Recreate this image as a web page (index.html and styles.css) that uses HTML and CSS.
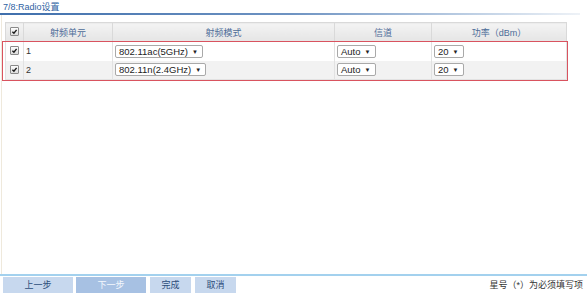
FILE: index.html
```html
<!DOCTYPE html>
<html>
<head>
<meta charset="utf-8">
<link rel="stylesheet" href="styles.css">
</head>
<body>
<div class="page">
  <div class="title">7/8:Radio设置</div>
  <div class="rule"></div>
  <div class="content">
    <table class="grid">
      <colgroup>
        <col class="c0"><col class="c1"><col class="c2"><col class="c3"><col class="c4">
      </colgroup>
      <thead>
        <tr>
          <th><span class="cb"><svg viewBox="0 0 10 10"><path d="M2 5.2 L4.2 7.4 L8 2.6" /></svg></span></th>
          <th>射频单元</th>
          <th>射频模式</th>
          <th>信道</th>
          <th>功率（dBm）</th>
        </tr>
      </thead>
      <tbody>
        <tr>
          <td class="ck"><span class="cb"><svg viewBox="0 0 10 10"><path d="M2 5.2 L4.2 7.4 L8 2.6" /></svg></span></td>
          <td>1</td>
          <td><span class="sel">802.11ac(5GHz)<i>▼</i></span></td>
          <td><span class="sel">Auto<i>▼</i></span></td>
          <td><span class="sel">20<i>▼</i></span></td>
        </tr>
        <tr class="alt">
          <td class="ck"><span class="cb"><svg viewBox="0 0 10 10"><path d="M2 5.2 L4.2 7.4 L8 2.6" /></svg></span></td>
          <td>2</td>
          <td><span class="sel">802.11n(2.4GHz)<i>▼</i></span></td>
          <td><span class="sel">Auto<i>▼</i></span></td>
          <td><span class="sel">20<i>▼</i></span></td>
        </tr>
      </tbody>
    </table>
    <div class="mark"></div>
  </div>
  <div class="footer">
    <div class="btns">
      <span class="btn w70">上一步</span>
      <span class="btn w70 dis">下一步</span>
      <span class="btn w41">完成</span>
      <span class="btn w41">取消</span>
    </div>
    <div class="note">星号（*）为必须填写项</div>
  </div>
</div>
</body>
</html>
```

FILE: styles.css
```css
* { box-sizing: border-box; }
html, body { margin: 0; padding: 0; background: #fff; }
body {
  font-family: "Liberation Sans", "Noto Sans CJK SC", sans-serif;
  font-size: 9px;
  color: #222;
  width: 587px;
  height: 293px;
  overflow: hidden;
}
.page { display: flex; flex-direction: column; height: 293px; }
.title {
  height: 13px;
  line-height: 12px;
  padding-left: 3px;
  padding-top: 1px;
  color: #2f63a3;
  font-size: 9px;
}
.rule {
  height: 2px;
  width: 580px;
  background: linear-gradient(to right, #3f6fac 0%, #6e93c2 50%, #c7d6e8 85%, #eef2f7 100%);
}
.content {
  position: relative;
  flex: 1;
  margin-left: 1px;
  border-left: 1px solid #efe9dc;
  padding: 7px 0 0 3px;
}
.grid {
  border-collapse: collapse;
  width: 561px;
  table-layout: fixed;
}
.c0 { width: 18px; }
.c1 { width: 89px; }
.c2 { width: 222px; }
.c3 { width: 97px; }
.c4 { width: 135px; }
.grid th {
  height: 19px;
  background: linear-gradient(#f3f3f3, #e5e5e5);
  border: 1px solid #d9d9d9;
  font-weight: normal;
  color: #4d6c98;
  font-size: 9px;
  padding: 0;
  text-align: center;
}
.grid td {
  height: 19px;
  border-left: 1px solid #e2e2e2;
  border-right: 1px solid #e2e2e2;
  padding: 0 0 0 2px;
  vertical-align: middle;
  color: #333;
}
.grid td.ck { padding: 0; text-align: center; }
.grid tr.alt td { background: #f2f2f2; }
.grid tbody tr:last-child td { border-bottom: 1px solid #e2e2e2; }
.cb {
  display: inline-block;
  width: 9px;
  height: 9px;
  border: 1px solid #8a8a8a;
  border-radius: 1px;
  background: linear-gradient(#fdfdfd, #dcdcdc);
  vertical-align: middle;
  position: relative;
  top: -1px;
}
.cb svg { display: block; width: 7px; height: 7px; }
.cb path { fill: none; stroke: #1a1a1a; stroke-width: 2; }
.sel {
  display: inline-block;
  height: 13px;
  line-height: 11px;
  border: 1px solid #a9a9a9;
  border-radius: 2px;
  background: #fff;
  padding: 0 4px 0 3px;
  font-size: 9.5px;
  color: #222;
}
.sel i {
  font-style: normal;
  font-size: 6px;
  margin-left: 4px;
  position: relative;
  top: -1px;
}
.mark {
  position: absolute;
  left: 0;
  top: 26px;
  width: 566px;
  height: 40px;
  border: 1px solid #d9535f;
  pointer-events: none;
}
.footer {
  height: 19px;
  border-top: 2px solid #a3d1ee;
  display: flex;
  justify-content: space-between;
  align-items: flex-start;
}
.btns { display: flex; padding-left: 3px; padding-top: 1px; gap: 3px; }
.btn {
  height: 16px;
  line-height: 16px;
  text-align: center;
  background: #c7d8ee;
  color: #2d4d7a;
  font-size: 9px;
}
.w70 { width: 70px; }
.w41 { width: 41px; margin-left: 1px; }
.btn.dis { background: #a7c1e3; color: #f4f8fd; }
.note {
  padding-top: 3px;
  padding-right: 4px;
  line-height: 12px;
  font-size: 9px;
  color: #333;
}
```
